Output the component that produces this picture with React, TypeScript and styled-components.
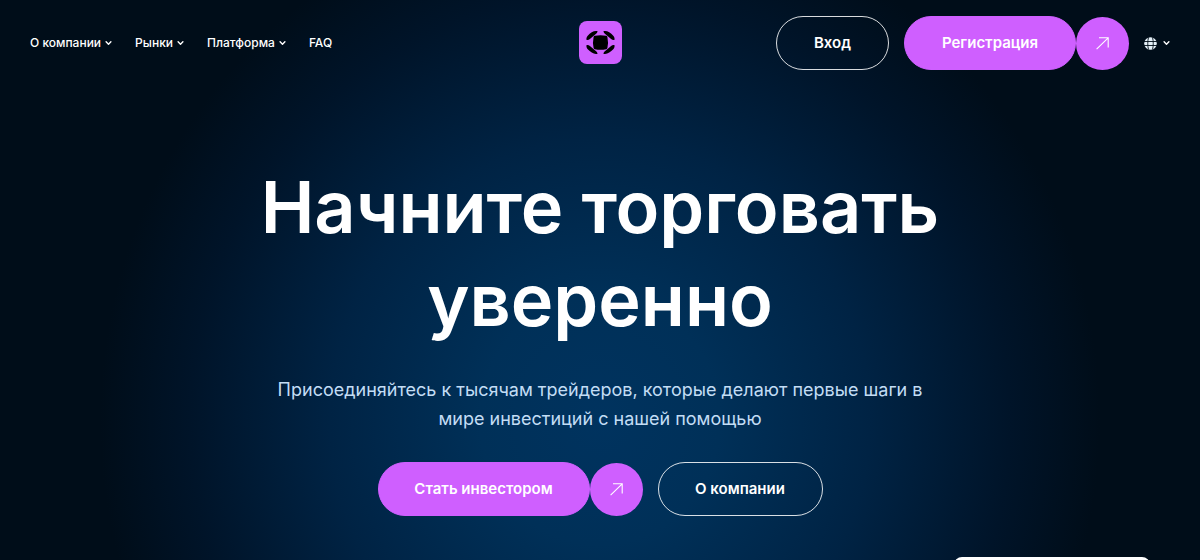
import React from "react";
import styled, { createGlobalStyle } from "styled-components";

const GlobalStyle = createGlobalStyle`
  *, *::before, *::after { box-sizing: border-box; }
  html, body { margin: 0; background: #000d19; }
  body {
    font-family: Inter, "Liberation Sans", sans-serif;
    color: #fff;
    -webkit-font-smoothing: antialiased;
  }
  button { font: inherit; color: inherit; background: none; border: 0; padding: 0; cursor: pointer; }
`;

const Page = styled.div`
  position: relative;
  min-height: 100vh;
  overflow: hidden;
  background: radial-gradient(ellipse 500px 520px at 50% 420px, #00335f 0%, #003058 24%, #002344 54%, #001429 82%, #000d19 100%);
`;

const Header = styled.header`
  display: grid;
  grid-template-columns: 1fr auto 1fr;
  align-items: center;
  padding: 16px 30px 15px;
`;

const Nav = styled.nav`
  display: flex;
  align-items: center;
  gap: 23px;
`;

const NavButton = styled.button`
  display: flex;
  align-items: center;
  gap: 4px;
  font-size: 12px;
  font-weight: 500;
  line-height: 20px;
  white-space: nowrap;
`;

const NavLink = styled.a`
  color: #fff;
  font-size: 12px;
  font-weight: 500;
  line-height: 20px;
  text-decoration: none;
`;

const LogoLink = styled.a`
  display: block;
  height: 44px;
`;

const Actions = styled.div`
  display: flex;
  justify-content: flex-end;
  align-items: center;
  gap: 15px;
`;

const Pair = styled.div`
  display: flex;
  align-items: center;
`;

const PillLink = styled.a<{ $filled?: boolean; $width: number }>`
  display: flex;
  align-items: center;
  justify-content: center;
  min-width: ${(p) => p.$width}px;
  height: 54px;
  border: 1px solid ${(p) => (p.$filled ? "#cf5fff" : "rgba(255, 255, 255, 0.85)")};
  border-radius: 27px;
  background: ${(p) => (p.$filled ? "#cf5fff" : "transparent")};
  color: #fff;
  font-size: 15px;
  font-weight: 600;
  line-height: 24px;
  text-decoration: none;
  white-space: nowrap;
`;

const ArrowLink = styled.a`
  display: flex;
  align-items: center;
  justify-content: center;
  width: 53px;
  height: 53px;
  border-radius: 50%;
  background: #cf5fff;
  color: #fff;
`;

const LanguageButton = styled.button`
  display: flex;
  align-items: center;
  gap: 6px;
`;

const Hero = styled.main`
  display: flex;
  flex-direction: column;
  align-items: center;
  padding: 75px 24px 44px;
  text-align: center;
`;

const Title = styled.h1`
  max-width: 740px;
  margin: 0;
  font-size: 72px;
  font-weight: 600;
  line-height: 93px;
`;

const Lead = styled.p`
  max-width: 660px;
  margin: 29px 0 0;
  color: #c3ddf5;
  font-size: 18px;
  line-height: 29px;
`;

const HeroActions = styled.div`
  display: flex;
  gap: 15px;
  margin-top: 29px;
`;

const Notice = styled.aside`
  position: absolute;
  right: 50px;
  top: 557px;
  width: 196px;
  height: 24px;
  border-radius: 8px;
  background: #fff;
`;

const Chevron = () => (
  <svg width="7" height="6" viewBox="0 0 7 6" fill="none" aria-hidden="true">
    <path d="M1.1 1.8 3.5 4.200l2.400-2.400" stroke="currentColor" strokeWidth="1.4" strokeLinecap="round" strokeLinejoin="round" />
  </svg>
);

const Arrow = () => (
  <svg width="13" height="13" viewBox="0 0 13 13" fill="none" aria-hidden="true">
    <path d="M.6 12.2 12.2.8M3 .8h9.2v9.6" stroke="currentColor" strokeWidth="1.1" />
  </svg>
);

const Globe = () => (
  <svg width="13" height="13" viewBox="0 0 13 13" aria-hidden="true">
    <circle cx="6.5" cy="6.5" r="6.3" fill="#e5f0f8" />
    <path d="M0 4.500h13M0 8.500h13M4.500.4c-1 3.800-1 8.400 0 12.200M8.500.4c1 3.800 1 8.400 0 12.200" stroke="#000d19" strokeWidth=".9" fill="none" />
  </svg>
);

const Logo = () => (
  <svg width="43" height="43" viewBox="0 0 43 43" aria-hidden="true">
    <rect width="43" height="43" rx="8" fill="#cf5fff" />
    <path d="M15.800 14.800q5.700-1.300 11.400 0 1 0 1.200 1.200 1.200 5.500 0 11-.2 1-1.200 1.200-5.700 1.300-11.400 0-1-.2-1.200-1.200-1.200-5.500 0-11 .2-1.200 1.200-1.200Z" />
    <path id="blade" d="M18.600 10.300C15 9.500 12 11.400 8.500 15c-1 1.100-1.300 2.700-.9 4 1.300.3 2.400-.2 3.300-.9l5.300-4.500c1.300-1.100 2.300-2.100 2.400-3.300Z" />
    <use href="#blade" transform="matrix(-1 0 0 1 43 0)" />
    <use href="#blade" transform="matrix(1 0 0 -1 0 43)" />
    <use href="#blade" transform="matrix(-1 0 0 -1 43 43)" />
  </svg>
);

const menus = ["О компании", "Рынки", "Платформа"];

export default function App() {
  return (
    <>
      <GlobalStyle />
      <Page>
        <Header>
          <Nav aria-label="Главное меню">
            {menus.map((label) => (
              <NavButton key={label} type="button">
                {label}
                <Chevron />
              </NavButton>
            ))}
            <NavLink href="#faq">FAQ</NavLink>
          </Nav>
          <LogoLink href="#" aria-label="Главная">
            <Logo />
          </LogoLink>
          <Actions>
            <PillLink href="#login" $width={113}>Вход</PillLink>
            <Pair>
              <PillLink href="#signup" $filled $width={172}>Регистрация</PillLink>
              <ArrowLink href="#signup" aria-label="Регистрация"><Arrow /></ArrowLink>
            </Pair>
            <LanguageButton type="button" aria-label="Язык">
              <Globe />
              <Chevron />
            </LanguageButton>
          </Actions>
        </Header>
        <Hero>
          <Title>Начните торговать уверенно</Title>
          <Lead>Присоединяйтесь к тысячам трейдеров, которые делают первые шаги в мире инвестиций с нашей помощью</Lead>
          <HeroActions>
            <Pair>
              <PillLink href="#invest" $filled $width={212}>Стать инвестором</PillLink>
              <ArrowLink href="#invest" aria-label="Стать инвестором"><Arrow /></ArrowLink>
            </Pair>
            <PillLink href="#about" $width={165}>О компании</PillLink>
          </HeroActions>
        </Hero>
        <Notice />
      </Page>
    </>
  );
}
